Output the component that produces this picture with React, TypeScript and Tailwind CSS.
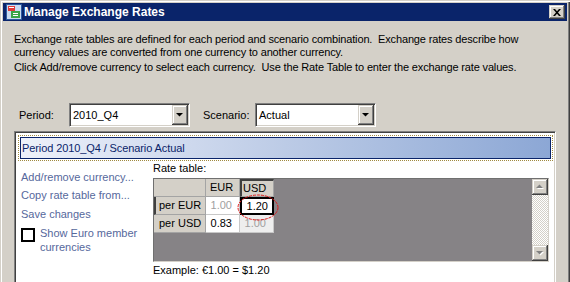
const raised =
  'bg-[#d4d0c8] shadow-[inset_-1px_-1px_0_#404040,inset_1px_1px_0_#d4d0c8,inset_-2px_-2px_0_#808080,inset_2px_2px_0_#ffffff]';

function Arrow({ up = false, disabled = false }: { up?: boolean; disabled?: boolean }) {
  const d = up ? 'M4 9h7L7.5 5.5z' : 'M4 6h7L7.5 9.5z';
  return (
    <svg width="16" height="16" viewBox="0 0 16 16">
      {disabled && <path d={d} transform="translate(1 1)" fill="#ffffff" />}
      <path d={d} fill={disabled ? '#808080' : '#000000'} />
    </svg>
  );
}

function Combo({ value, width }: { value: string; width: string }) {
  return (
    <div
      className={`${width} h-[24px] flex border border-t-[#808080] border-l-[#808080] border-r-white border-b-white shadow-[inset_1px_1px_0_#404040,inset_-1px_-1px_0_#d4d0c8] p-[1px]`}
    >
      <div className="flex-1 bg-white flex items-center pl-[2px] leading-[13px] text-[11px]">{value}</div>
      <div className={`w-[16px] h-full flex items-center justify-center ${raised}`}>
        <Arrow />
      </div>
    </div>
  );
}

function TitleIcon() {
  return (
    <svg width="16" height="16" viewBox="0 0 16 16">
      <rect x="0.5" y="0.5" width="15" height="15" fill="#c9daf2" stroke="#2d5aa0" />
      <rect x="2" y="2" width="7" height="5" fill="#e23a3a" />
      <rect x="3" y="3" width="5" height="1" fill="#ffffff" />
      <rect x="5" y="7" width="9" height="7" fill="#3aa448" />
      <rect x="7" y="9" width="5" height="1" fill="#ffffff" />
      <rect x="7" y="11" width="5" height="1" fill="#ffffff" />
    </svg>
  );
}

export default function App() {
  return (
    <div className="w-[570px] h-[282px] overflow-hidden font-['Liberation_Sans',Arial,sans-serif] text-[11px] text-black">
      <div className="h-[320px] bg-[#d4d0c8] p-[3px] shadow-[inset_1px_1px_0_#d4d0c8,inset_2px_2px_0_#ffffff,inset_-1px_-1px_0_#404040,inset_-2px_-2px_0_#808080]">
        {/* title bar */}
        <div className="h-[18px] bg-[#0a246a] flex items-center">
          <div className="ml-[3px]">
            <TitleIcon />
          </div>
          <span className="ml-[2px] text-white font-bold text-[12px] leading-[18px]">Manage Exchange Rates</span>
          <div className={`ml-auto mr-[2px] w-[16px] h-[14px] flex items-center justify-center ${raised}`}>
            <svg width="8" height="7" viewBox="0 0 8 7">
              <path d="M0 0h2l2 2.3L6 0h2L5 3.5 8 7H6L4 4.7 2 7H0l3-3.5z" fill="#000" />
            </svg>
          </div>
        </div>

        <div className="px-[11px]">
          {/* intro */}
          <div className="tracking-[-0.15px]">
            <p className="pt-[12px] leading-[13px]">
              Exchange rate tables are defined for each period and scenario combination.&nbsp; Exchange rates describe how
              <br />
              currency values are converted from one currency to another currency.
            </p>
            <p className="mt-[2px] leading-[13px]">
              Click Add/remove currency to select each currency.&nbsp; Use the Rate Table to enter the exchange rate values.
            </p>
          </div>

          {/* period / scenario */}
          <div className="mt-[29px] flex items-center h-[24px]">
            <span className="ml-[5px] w-[50px]">Period:</span>
            <Combo value="2010_Q4" width="w-[121px]" />
            <span className="ml-[13px] w-[52px]">Scenario:</span>
            <Combo value="Actual" width="w-[121px]" />
          </div>

          {/* main panel */}
          <div className="mt-[4px] w-[542px] h-[200px] bg-white border border-t-[#808080] border-l-[#808080] border-r-white border-b-white shadow-[inset_1px_1px_0_#404040,inset_-1px_-1px_0_#d4d0c8] p-[1px]">
            <div className="mt-[2px] ml-[2px] mr-[1px] h-[26px] border border-dotted border-[#a08a40] p-[1px]">
              <div className="h-full border border-[#0a246a] bg-gradient-to-r from-[#eef1fa] via-[#bccbe6] to-[#8ca7d5] pl-[1px] leading-[20px] text-[#0a246a] tracking-[-0.1px]">
                Period 2010_Q4 / Scenario Actual
              </div>
            </div>

            <div className="flex">
              {/* left links */}
              <div className="w-[137px] pl-[5px] pt-[10px] text-[#56689c] leading-[13px]">
                <div>Add/remove currency...</div>
                <div className="mt-[5px]">Copy rate table from...</div>
                <div className="mt-[6px]">Save changes</div>
                <div className="mt-[5px] flex items-start">
                  <div className="mt-[2px] w-[14px] h-[14px] border-2 border-black bg-white shrink-0" />
                  <div className="ml-[5px] leading-[14px]">
                    Show Euro member
                    <br />
                    currencies
                  </div>
                </div>
              </div>

              {/* rate table */}
              <div className="pt-[1px]">
                <div className="leading-[13px]">Rate table:</div>
                <div className="relative mt-[3px] w-[396px] h-[84px] bg-[#868386] border border-t-[#707070] border-l-[#707070] border-r-[#d4d0c8] border-b-[#d4d0c8] flex justify-between">
                  <div className="grid grid-cols-[52px_34px_34px] grid-rows-[18px_18px_18px] self-start">
                    <div className="bg-[#d4d0c8] border-r border-b border-[#a4a4a4]" />
                    <div className="bg-[#d4d0c8] border-r border-b border-[#a4a4a4] pl-[4px] flex items-center">EUR</div>
                    <div className="bg-[#d4d0c8] border-t-2 border-l-2 border-t-[#404040] border-l-[#404040] border-r border-b border-r-[#a4a4a4] border-b-[#a4a4a4] pl-[1px] flex items-center">
                      USD
                    </div>

                    <div className="bg-[#d4d0c8] border-l-2 border-l-[#404040] border-r border-b border-r-[#a4a4a4] border-b-[#a4a4a4] pl-[3px] flex items-center">
                      per EUR
                    </div>
                    <div className="bg-white border-r border-b border-[#c8c8c8] pr-[7px] flex items-center justify-end text-[#a0a0a0]">
                      1.00
                    </div>
                    <div className="bg-white border-2 border-black pr-[4px] flex items-center justify-end">1.20</div>

                    <div className="bg-[#d4d0c8] border-r border-b border-[#a4a4a4] pl-[5px] flex items-center">per USD</div>
                    <div className="bg-white border-r border-b border-[#c8c8c8] pr-[7px] flex items-center justify-end">0.83</div>
                    <div className="bg-[#eeeeee] border-r border-b border-[#c8c8c8] pr-[7px] flex items-center justify-end text-[#a0a0a0]">
                      1.00
                    </div>
                  </div>

                  {/* scrollbar */}
                  <div className="w-[16px] flex flex-col">
                    <div className={`h-[16px] ${raised}`}>
                      <Arrow up disabled />
                    </div>
                    <div className="flex-1 bg-[repeating-conic-gradient(#d4d0c8_0_25%,#ffffff_0_50%)] bg-[length:2px_2px]" />
                    <div className={`h-[16px] ${raised}`}>
                      <Arrow disabled />
                    </div>
                  </div>

                  {/* highlight ring */}
                  <svg className="absolute left-[83px] top-[15px]" width="42" height="27" viewBox="0 0 42 27">
                    <ellipse cx="21" cy="13.5" rx="20" ry="12.5" fill="none" stroke="#e01818" strokeWidth="1" strokeDasharray="3 1" />
                  </svg>
                </div>
                <div className="mt-[2px] leading-[13px]">Example: €1.00 = $1.20</div>
              </div>
            </div>
          </div>
        </div>
      </div>
    </div>
  );
}
